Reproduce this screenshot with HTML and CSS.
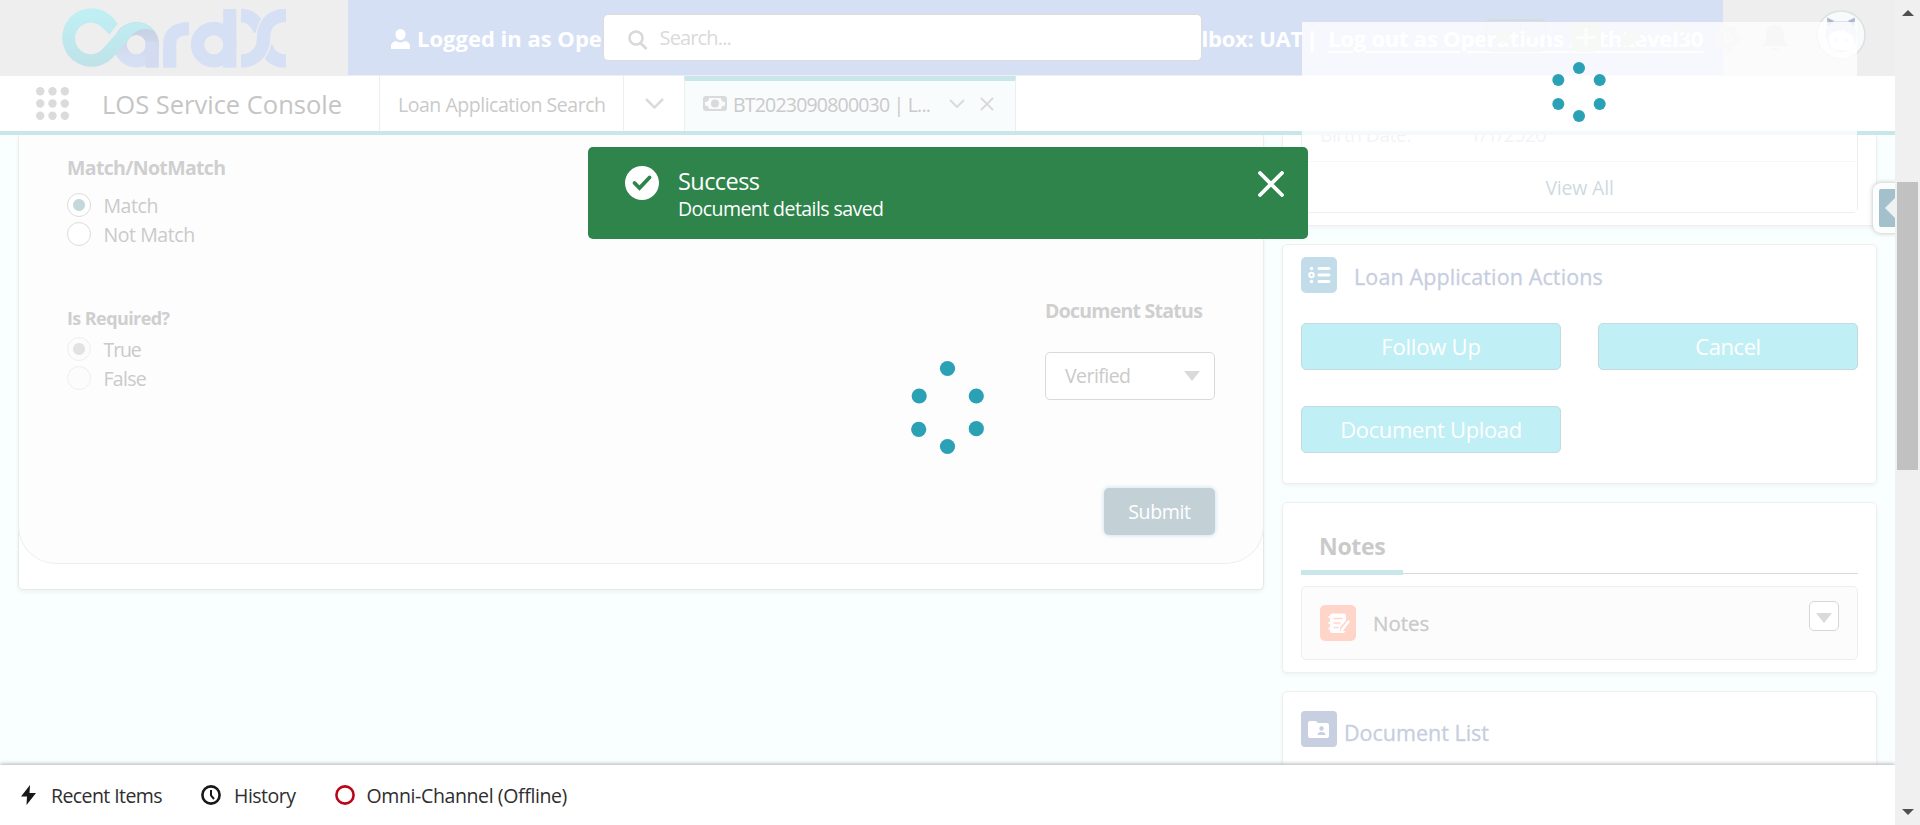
FILE: index.html
```html
<!DOCTYPE html>
<html lang="en">
<head>
<meta charset="utf-8">
<title>LOS Service Console</title>
<link rel="stylesheet" href="styles.css">
</head>
<body>
<div class="app">
  <div class="page">
    <header class="header">
      <svg class="logo" viewBox="50 0 250 75" width="250" height="75">
        <defs>
          <linearGradient id="teal" x1="0" y1="0" x2="0" y2="1"><stop offset="0" stop-color="#bff0f5"/><stop offset="1" stop-color="#bfe2e8"/></linearGradient>
          <linearGradient id="navy" x1="0" y1="0" x2="0" y2="1"><stop offset="0" stop-color="#c8d0e3"/><stop offset="1" stop-color="#d6e0f5"/></linearGradient>
        </defs>
        <circle cx="136.3" cy="44.7" r="16.2" fill="none" stroke="url(#navy)" stroke-width="13.2"/>
        <rect x="145.600" y="42" width="13.200" height="25.700" fill="#d2dbf0"/>
        <path d="M117.500 24A29.300 29.300 0 1 0 112 58.500L127.500 41C134 29 146 26.500 155 31.500C147 21 130 18 120 29.500L101.500 50A15.700 15.700 0 1 1 102.500 28L109.500 34.500Z" fill="url(#teal)"/>
        <g fill="none" stroke="#d6e0f5" stroke-width="13.300">
          <path d="M169.700 67.700V44.700Q169.700 28.700 189 28.700"/>
          <circle cx="213.700" cy="44.700" r="16.200"/>
          <line x1="229.700" y1="9" x2="229.700" y2="67.700"/>
          <path d="M241 15.500Q255 16 260 31M266 46Q270 61 286 61"/>
        </g>
        <path d="M286 15.500C270 15.500 263.500 26 263.500 38S256 61 241 61" fill="none" stroke="#eee" stroke-width="16"/>
        <path d="M286 15.500C270 15.500 263.500 26 263.500 38S256 61 241 61" fill="none" stroke="#d6e0f5" stroke-width="13.300"/>
      </svg>
      <div class="band">
        <div class="band-left"><svg width="19" height="20" viewBox="0 0 19 20" fill="#fff"><ellipse cx="9.500" cy="5.500" rx="5" ry="5.500"/><path d="M0 20v-3q0-4 5-5q4.500 3 9 0q5 1 5 5v3z"/></svg><b>Logged in as Ope</b></div>
        <div class="search"><svg width="20" height="20" viewBox="0 0 20 20" fill="none" stroke="#d9d9d9" stroke-width="2.600"><circle cx="8" cy="8" r="6.500"/><path d="M12.500 13l6 6"/></svg><span>Search...</span></div>
        <div class="band-right"><b class="uat">lbox: UAT</b><b class="bar">|</b><b class="logout">Log out as Operations AuthLevel30</b></div>
      </div>
      <svg class="tools" width="400" height="75" viewBox="1480 0 400 75">
        <g fill="none" stroke="#d3ddd0" stroke-width="1.500"><rect x="1486" y="20" width="60" height="31" rx="5"/><path d="M1520 20v31"/></g>
        <g fill="#d9e2dc"><path d="M1503 25l3 7h7l-5.500 5 2 8-6.500-4-6.500 4 2-8-5.500-5h7z"/><path d="M1526 33h13l-6.500 8z"/><rect x="1571" y="22" width="30" height="30" rx="8"/></g>
        <path d="M1586 28v19M1576.500 37.500h19" stroke="#f4f6fb" stroke-width="3"/>
        <g fill="#d9e2dc"><path d="M1619 44l7-12q6-8 11 0l5 8-9 2-4 5z"/><path d="M1624 47h18v2h-18z"/></g>
        <path d="M1674 32q0-6 6-6t6 6q0 4-6 7v4M1680 47v4" fill="none" stroke="#d9e2dc" stroke-width="3"/>
        <circle cx="1727" cy="37.500" r="8.500" fill="none" stroke="#e0e4e0" stroke-width="6"/><circle cx="1727" cy="37.500" r="12" fill="none" stroke="#e0e4e0" stroke-width="4" stroke-dasharray="5 7.500"/>
        <path d="M1728 32l-4 6h3l-1 5 5-7h-3z" fill="#e0e4e0"/>
        <path d="M1761 46q5-3 5-11 0-10 9-10t9 10q0 8 5 11zM1771 48h8q-4 6-8 0" fill="#d6dcd6"/>
        <circle cx="1841" cy="35" r="24" fill="#f8fafc" stroke="#dbe1e1" stroke-width="1.500"/>
        <path d="M1827 25v-8l8 4h12l8-4v10q4 10-2 20-12 10-24 0-6-12-2-22z" fill="#dce3ef"/>
        <path d="M1827 18l7 3-6 5zM1855 18l-7 3 6 5z" fill="#a9b6cc"/>
        <path d="M1829 38q2-8 12-7l3-2 1 3q8 1 9 9 0 8-6 9h-13q-6-2-6-12z" fill="#fff"/><circle cx="1836" cy="40" r="2" fill="#e8eef5"/><circle cx="1846" cy="40" r="2" fill="#e8eef5"/>
      </svg>
    </header>
    <nav class="nav">
      <div class="nav-app">
        <svg width="33" height="33" viewBox="0 0 33 33" fill="#dbdbdb"><circle cx="4.200" cy="4.200" r="4.200"/><circle cx="16.500" cy="4.200" r="4.200"/><circle cx="28.800" cy="4.200" r="4.200"/><circle cx="4.200" cy="16.500" r="4.200"/><circle cx="16.500" cy="16.500" r="4.200"/><circle cx="28.800" cy="16.500" r="4.200"/><circle cx="4.200" cy="28.800" r="4.200"/><circle cx="16.500" cy="28.800" r="4.200"/><circle cx="28.800" cy="28.800" r="4.200"/></svg>
        <span class="app-name">LOS Service Console</span>
      </div>
      <div class="nav-item"><span>Loan Application Search</span></div>
      <div class="nav-more"><svg width="19" height="11" viewBox="0 0 19 11" fill="none" stroke="#dbdbdb" stroke-width="2.500"><path d="M1 1l8.500 8.500L18 1"/></svg></div>
      <div class="nav-tab">
        <svg width="24" height="16" viewBox="0 0 24 16"><rect x="1" y="1" width="22" height="13" rx="2" fill="none" stroke="#d9dbdb" stroke-width="2"/><circle cx="12" cy="7.500" r="4" fill="#d9dbdb"/><path d="M2 2h4q0 4-4 4zM22 2h-4q0 4 4 4zM2 13.500h4q0-4-4-4zM22 13.500h-4q0-4 4-4z" fill="#d9dbdb"/></svg>
        <span class="tab-name">BT2023090800030 | L...</span>
        <svg width="16" height="9" viewBox="0 0 16 9" fill="none" stroke="#d9dbdb" stroke-width="2"><path d="M1 1l7 7 7-7"/></svg>
        <svg class="tab-x" width="14" height="14" viewBox="0 0 14 14" fill="none" stroke="#d9dbdb" stroke-width="2"><path d="M1 1l12 12M13 1L1 13"/></svg>
      </div>
    </nav>
    <main class="content">
      <section class="doc-card">
        <div class="doc-form">
          <div class="options">
            <h3 class="match-title">Match/NotMatch</h3>
            <label class="opt"><i class="radio on"></i><span>Match</span></label>
            <label class="opt"><i class="radio"></i><span>Not Match</span></label>
            <h3 class="req">Is Required?</h3>
            <label class="opt wide"><i class="radio on off"></i><span class="true">True</span></label>
            <label class="opt wide"><i class="radio off"></i><span>False</span></label>
          </div>
          <div class="status">
            <h3>Document Status</h3>
            <div class="select"><span>Verified</span><i class="caret"></i></div>
            <button class="submit">Submit</button>
          </div>
        </div>
      </section>
      <aside class="side">
        <section class="card info">
          <div class="info-box">
            <div class="info-row"><span>Birth Date:</span><span class="bd-val">1/1/2526</span></div>
            <div class="view-all">View All</div>
          </div>
        </section>
        <section class="card actions">
          <div class="card-head">
            <svg width="36" height="36" viewBox="0 0 36 36"><rect width="36" height="36" rx="5" fill="#c3dcea"/><g fill="none" stroke="#fff" stroke-width="3" stroke-linecap="round"><path d="M18 11.500h10M18 18h10M18 24.500h10"/><circle cx="10.500" cy="18" r="2.200" stroke-width="2"/></g><g fill="#fff"><circle cx="10.500" cy="11.500" r="1.700"/><circle cx="10.500" cy="24.500" r="1.700"/></g></svg>
            <span>Loan Application Actions</span>
          </div>
          <div class="btns"><button class="act">Follow Up</button><button class="act cancel">Cancel</button><button class="act upload">Document Upload</button></div>
        </section>
        <section class="card notes">
          <div class="tabs"><b class="tab">Notes</b></div>
          <div class="note-box">
            <svg width="36" height="36" viewBox="0 0 36 36"><rect width="36" height="36" rx="5" fill="#ffd5ca"/><path d="M12 8.500h12q2 0 2 2v5l-6 7v3.500h5.500q-.5 2-2.500 2H12q-2 0-2-2v-1.500H8.500v-2H10v-3.500H8.500v-2H10V13H8.500v-2H10q0-2.500 2-2.500z" fill="#fff"/><path d="M13.500 13.500h9M13.500 18h7M13.500 22.500h5" stroke="#ffd5ca" stroke-width="1.600"/><path d="M28.500 16.500L22 25" stroke="#fff" stroke-width="2.600" stroke-linecap="round"/></svg>
            <span>Notes</span>
            <span class="menu"><i class="caret"></i></span>
          </div>
        </section>
        <section class="card docs">
          <svg width="36" height="36" viewBox="0 0 36 36"><rect width="36" height="36" rx="4" fill="#c7cfe1"/><path d="M7 12q0-2 2-2h6l2 2h9q2 0 2 2v11q0 2-2 2H9q-2 0-2-2z" fill="#fff"/><circle cx="20.500" cy="17.500" r="2.200" fill="#c7cfe1"/><path d="M16.500 24q0-3 4-3t4 3z" fill="#c7cfe1"/></svg>
          <span class="docs-title">Document List</span>
        </section>
      </aside>
    </main>
    <footer class="utility">
      <div class="u u1"><svg width="15" height="20" viewBox="0 0 15 20" fill="#181818"><path d="M9 0L0 11.500h6L5.500 20 15 8H8.500z"/></svg><span>Recent Items</span></div>
      <div class="u u2"><svg width="20" height="20" viewBox="0 0 20 20" fill="none" stroke="#181818" stroke-width="2.600"><circle cx="10" cy="10" r="8.600"/><path d="M10 5v5.500l3 3.500" stroke-width="2"/></svg><span>History</span></div>
      <div class="u u3"><svg width="20" height="20" viewBox="0 0 20 20" fill="none" stroke="#ba0517" stroke-width="2.600"><circle cx="10" cy="10" r="8.600"/></svg><span>Omni-Channel (Offline)</span></div>
    </footer>
    <div class="veil"></div>
    <svg class="spin-top" width="60" height="64" viewBox="1549 60 60 64" fill="#2aa1b5"><circle cx="1579" cy="68" r="6"/><circle cx="1558.300" cy="80" r="6"/><circle cx="1599.700" cy="80" r="6"/><circle cx="1558.300" cy="104" r="6"/><circle cx="1599.700" cy="104" r="6"/><circle cx="1579" cy="116" r="6"/></svg>
    <svg class="spin-main" width="80" height="100" viewBox="907 358 80 100" fill="#2aa1b5"><circle cx="947.500" cy="368.500" r="7.600"/><circle cx="919.200" cy="396" r="7.600"/><circle cx="976.300" cy="396" r="7.600"/><circle cx="918.700" cy="429.300" r="7.600"/><circle cx="976.300" cy="428.700" r="7.600"/><circle cx="947.500" cy="446.500" r="7.600"/></svg>
    <div class="toast">
      <svg width="34" height="34" viewBox="0 0 34 34"><circle cx="17" cy="17" r="17" fill="#fff"/><path d="M9.500 17l5 5 10-10.500" fill="none" stroke="#2e844a" stroke-width="3.800" stroke-linecap="round"/></svg>
      <div class="toast-text"><span class="toast-title">Success</span><span class="toast-msg">Document details saved</span></div>
      <svg class="toast-x" width="26" height="26" viewBox="0 0 26 26" stroke="#fff" stroke-width="3.800" stroke-linecap="round"><path d="M2 2l22 22M24 2L2 24"/></svg>
    </div>
    <div class="drawer"><div class="drawer-in"><svg width="12" height="22" viewBox="0 0 12 22"><path d="M12 0v22L1 11z" fill="#eff2f2"/></svg></div></div>
  </div>
  <div class="scroll"><i class="up"></i><i class="thumb"></i><i class="down"></i></div>
</div>
</body>
</html>
```
FILE: styles.css
```css
* { box-sizing: border-box; }
body { margin: 0; overflow: hidden; font-family: "Open Sans", "Noto Sans", sans-serif; font-size: 19.5px; line-height: 28px; color: #cacaca; }
svg { display: block; flex: none; }
span, b { white-space: nowrap; }
h3 { margin: 0; font-size: 19.5px; font-weight: 700; line-height: 28px; letter-spacing: -.64px; color: #cfcfcf; white-space: nowrap; }
button { border: 0; padding: 0; font: inherit; color: #fff; }
.app { display: flex; width: 1920px; height: 825px; }
.page { position: relative; display: flex; flex-direction: column; width: 1895px; height: 825px; overflow: hidden; background: #f9ffff; }
.header { display: flex; flex: none; height: 76px; background: #eee; position: relative; }
.logo { margin-left: 50px; }
.band { display: flex; align-items: center; margin-left: 48px; width: 1375px; height: 75px; background: #d6e0f5; color: #fff; font-size: 22px; }
.band-left { display: flex; align-items: center; gap: 7px; width: 254.5px; padding: 3px 0 0 43px; overflow: hidden; }
.band-left b { margin-top: -2px; }
.search { display: flex; align-items: center; gap: 12px; width: 599px; height: 47px; border: 1px solid #dcdcdc; border-radius: 5px; background: #fff; color: #dadada; padding-left: 24px; font-size: 20px; letter-spacing: -.84px; }
.search svg { margin-top: 4px; }
.band-right { display: flex; padding-top: 1px; }
.uat { letter-spacing: -.22px; }
.bar { margin: 0 10px 0 3px; }
.logout { letter-spacing: -.23px; text-decoration: underline; text-decoration-thickness: 2px; text-underline-offset: 4px; }
.tools { position: absolute; left: 1480px; top: 0; }
.nav { display: flex; flex: none; height: 59px; background: #fff; border-bottom: 4px solid #c9e7eb; }
.nav span { padding-top: 2px; }
.nav-app { display: flex; align-items: center; width: 380px; padding-left: 36px; gap: 33px; border-right: 1px solid #eee; }
.nav .app-name { padding-top: 0; font-size: 25.5px; color: #c5c5c5; }
.nav-item { display: flex; align-items: center; width: 244px; padding-left: 18px; border-right: 1px solid #eee; letter-spacing: -.47px; }
.nav-more { display: flex; align-items: center; width: 60px; padding-left: 21px; }
.nav-tab { display: flex; align-items: center; width: 332px; padding: 0 20px 5px 18px; border: solid #eee; border-width: 0 1px; border-top: 5px solid #c9e7eb; background: #f9fcfd; letter-spacing: -.8px; }
.tab-name { margin-left: 6px; width: 216px; }
.tab-x { margin-left: 15px; }
.content { display: flex; flex: 1; min-height: 0; gap: 18px; padding: 0 18px; overflow: hidden; align-items: flex-start; }
.doc-card { width: 1246px; height: 455px; border: 1px solid #e6e8e8; border-top: 0; border-radius: 0 0 5px 5px; background: #fff; box-shadow: 0 2px 4px #eef3f3; }
.doc-form { display: flex; justify-content: space-between; height: 429px; padding: 19px 48px 0 48px; background: #fdfdfd; border: 1px solid #ededed; border-width: 0 1px 1px; margin: 0 -1px; border-radius: 0 0 38px 38px; }
.options { display: flex; flex-direction: column; }
.match-title { margin-bottom: 8.5px; }
.opt { display: flex; align-items: center; gap: 12.5px; height: 29px; letter-spacing: -.42px; }
.opt span { padding-top: 2px; }
.opt.wide { letter-spacing: -.7px; }
.opt .true { letter-spacing: -1.1px; }
.radio { width: 24px; height: 24px; border: 1px solid #dcdcdc; border-radius: 50%; background: #fff; }
.radio.on { background: radial-gradient(circle, #c4d8dc 5.5px, #fff 6.5px); }
.radio.off { border-color: #efefef; background: #fcfcfc; }
.radio.on.off { background: radial-gradient(circle, #e2e2e2 5.5px, #fcfcfc 6.5px); }
.req { margin: 55.5px 0 2.5px; font-size: 18px; letter-spacing: -.59px; }
.status { display: flex; flex-direction: column; width: 170px; padding-top: 143px; }
.status h3 { letter-spacing: -.75px; }
.select { display: flex; align-items: center; justify-content: space-between; height: 48px; margin-top: 27px; padding: 0 14px 0 19px; border: 1px solid #dadada; border-radius: 5px; background: #fff; letter-spacing: -.54px; }
.caret { border: solid transparent; border-width: 10px 8px 0; border-top-color: #dadada; }
.submit { width: 111px; height: 47px; margin: 88px 0 0 auto; border-radius: 5px; background: #c3d1d6; box-shadow: 0 0 5px #c5dcec; letter-spacing: -.34px; }
.side { width: 595px; display: flex; flex-direction: column; gap: 18px; }
.card { border: 1px solid #efefef; border-radius: 5px; background: #fff; box-shadow: 0 2px 4px #eef3f3; padding: 0 18px; }
.info { height: 91px; border-top: 0; border-radius: 0 0 5px 5px; }
.info-box { height: 78px; border: 1px solid #efefef; border-top: 0; border-radius: 0 0 5px 5px; }
.info-row { display: flex; height: 27px; border-bottom: 1px solid #dadada; padding-left: 18px; align-items: flex-end; letter-spacing: -.62px; }
.info-row span { height: 42px; line-height: 28px; margin-bottom: -2px; }
.bd-val { margin-left: 59px; }
.view-all { display: flex; justify-content: center; padding-top: 12px; color: #195271; letter-spacing: -.2px; }
.actions { height: 240px; padding-top: 12px; }
.card-head { display: flex; align-items: center; gap: 17px; font-size: 21.5px; letter-spacing: .12px; -webkit-text-stroke: .3px #c6cee0; color: #c6cee0; }
.card-head span { padding-top: 3px; }
.btns { display: grid; grid-template-columns: 260px 260px; justify-content: space-between; row-gap: 36px; margin-top: 30px; }
.act { height: 47px; padding-bottom: 2px; border: 1px solid #c3dade; border-radius: 5px; background: #c0eff5; font-size: 22px; letter-spacing: -.19px; }
.cancel { letter-spacing: -.42px; }
.upload { letter-spacing: -.36px; }
.notes { height: 171px; }
.tabs { display: flex; height: 71px; border-bottom: 1px solid #dadada; }
.tab { height: 72px; padding: 29px 18px 0; font-size: 23px; letter-spacing: -.3px; border-bottom: 5px solid #c9e7eb; }
.note-box { display: flex; align-items: center; gap: 17px; height: 74px; margin-top: 12px; padding: 0 18px; border: 1px solid #eee; border-radius: 5px; background: #fcfcfc; font-size: 20.5px; -webkit-text-stroke: .3px #cacaca; }
.menu { display: flex; align-items: center; justify-content: center; width: 30px; height: 30px; margin: -14px 0 0 auto; border: 1px solid #d6d6d6; border-radius: 5px; background: #fff; padding-top: 3px; }
.docs { display: flex; gap: 7px; height: 150px; padding-top: 19px; font-size: 21.5px; color: #c6cee0; -webkit-text-stroke: .3px #c6cee0; }
.docs-title { padding-top: 8px; }
.utility { display: flex; align-items: center; flex: none; height: 60px; background: #fff; color: #2e2e2e; position: relative; box-shadow: 0 -1px 4px #aeb4b4; }
.u { display: flex; align-items: center; }
.u span { padding-top: 2px; }
.u1 { padding-left: 21px; gap: 15px; width: 201px; letter-spacing: -.58px; }
.u2 { gap: 13px; width: 133.5px; letter-spacing: -.5px; }
.u3 { gap: 12px; letter-spacing: -.38px; }
.veil { position: absolute; left: 1302px; top: 22px; width: 555px; height: 190px; background: rgba(255,255,255,.78); }
.spin-top { position: absolute; left: 1549px; top: 60px; }
.spin-main { position: absolute; left: 907px; top: 358px; }
.toast { position: absolute; left: 588px; top: 147px; width: 720px; height: 92px; display: flex; align-items: flex-start; padding: 19px 24px 0 37px; border-radius: 5px; background: #2e844a; color: #fff; }
.toast-text { display: flex; flex-direction: column; align-items: flex-start; margin: 0 auto 0 19px; letter-spacing: -.56px; }
.toast-title { font-size: 23.5px; line-height: 30px; }
.toast-msg { line-height: 25px; }
.toast-x { margin-top: 5px; }
.drawer { position: absolute; left: 1873px; top: 183px; width: 30px; height: 50px; padding: 6px; border-radius: 8px; background: #fcfefe; box-shadow: 0 0 5px #bbb; }
.drawer-in { display: flex; align-items: center; height: 38px; padding-left: 5px; background: #a3c1cd; border-radius: 2px; }
.scroll { display: flex; flex-direction: column; align-items: center; width: 25px; background: #f0f0f0; }
.up { margin-top: 10px; border: solid transparent; border-width: 0 6px 6px; border-bottom-color: #505050; }
.thumb { width: 21px; height: 288px; margin-top: 166px; background: #c1c1c1; }
.down { margin: auto 0 10px; border: solid transparent; border-width: 6px 6px 0; border-top-color: #505050; }
```
